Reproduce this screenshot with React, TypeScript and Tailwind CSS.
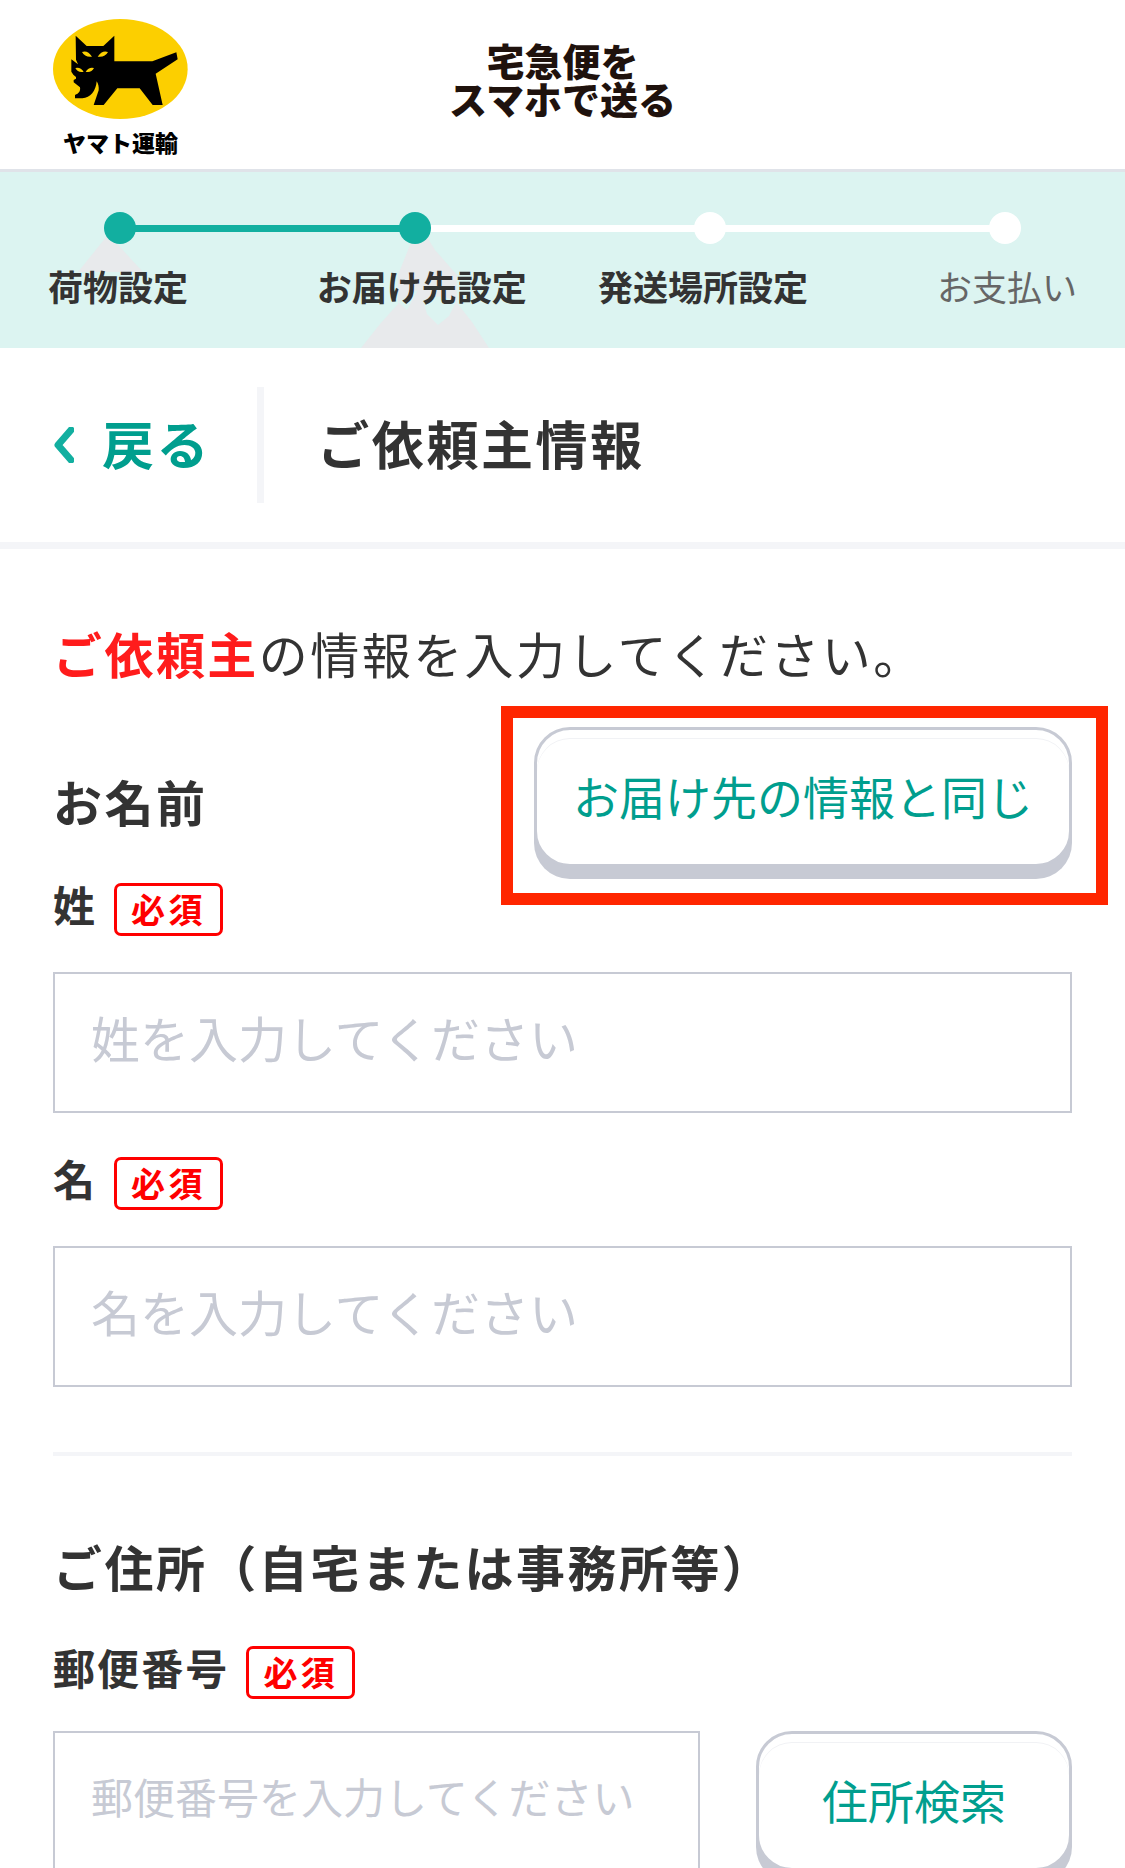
const steps = [
  { label: "荷物設定", done: true, className: "text-left font-bold text-[#333]" },
  { label: "お届け先設定", done: true, className: "text-center font-bold text-[#333]" },
  { label: "発送場所設定", done: false, className: "text-center font-bold text-[#333]" },
  { label: "お支払い", done: false, className: "text-right text-[#666]" },
];

function YamatoLogo() {
  return (
    <div className="flex w-[135px] flex-col items-center gap-[9px]">
      <svg viewBox="0 0 405 300" className="h-[100px] w-full" aria-hidden="true">
        <ellipse cx="202" cy="150" rx="202" ry="150" fill="#fccf00" />
        <path
          fill="#000"
          d="M68 50 L101 81 H151 L184 50 V127 H298 L370 100 L374 121 L308 164 L329 258 H299 L260 208 H193 L152 258 H122 L137 214 C138 204 136 195 131 187 C129 215 112 237 88 238 H66 V228 C78 224 83 216 81 205 L62 190 V183 L69 179 V174 L61 167 L55 158 V121 L75 136 L69 122 Z"
        />
        <path
          fill="#fccf00"
          d="M87 99 Q104 93 117 113 Q96 116 87 99 Z M165 99 Q147 93 134 113 Q156 116 165 99 Z M67 147 Q82 143 92 158 Q75 162 67 147 Z M123 147 Q108 143 98 158 Q115 162 123 147 Z"
        />
      </svg>
      <p className="text-[23px] leading-7 font-black whitespace-nowrap text-black">ヤマト運輸</p>
    </div>
  );
}

function Header() {
  return (
    <header className="grid grid-cols-[1fr_auto_1fr] border-b-3 border-[#e0e3e9] px-[53px] pt-[19px] pb-[13px]">
      <YamatoLogo />
      <h1 className="pt-[22px] text-center text-[38px] leading-[38px] font-black text-[#1f120d]">
        <span className="block">宅急便を</span>
        <span className="block">スマホで送る</span>
      </h1>
    </header>
  );
}

function Stepper() {
  return (
    <nav className="relative h-[176px] bg-[#dcf4f1]">
      <svg className="absolute top-0 left-0 h-[176px] w-[500px]" viewBox="0 0 500 176" aria-hidden="true">
        <g fill="#e8eaec">
          <path d="M107 64 L78 100 H143 L119 74 Z" />
          <path d="M412 68 L398 103 V132 L380 152 L361 176 H489 L472 150 L457 131 V103 L435 78 L427 65 Z" />
        </g>
        <g fill="#dcf4f1">
          <path d="M398 130 L407 138 L418 118 Z" />
          <path d="M423 128 L427 142 L438 153 L449 144 L456 130 Q440 120 423 128 Z" />
        </g>
      </svg>
      <div className="relative mx-[104px] flex items-center justify-between pt-10">
        <div className="absolute inset-x-4 h-[7px] bg-white" />
        <div className="absolute left-4 h-[7px] w-1/3 bg-[#12afa0]" />
        {steps.map((step) => (
          <span
            key={step.label}
            className={step.done ? "relative size-8 rounded-full bg-[#12afa0]" : "relative size-8 rounded-full bg-white"}
          />
        ))}
      </div>
      <ol className="relative grid grid-cols-4 pt-[22px] text-[35px] leading-10">
        {steps.map((step) => (
          <li key={step.label} className="first:pl-12 last:pr-12">
            <p className={step.className}>{step.label}</p>
          </li>
        ))}
      </ol>
    </nav>
  );
}

function TitleBar() {
  return (
    <div className="flex items-center border-b-7 border-[#f4f5f8] px-[53px] py-[39px]">
      <a href="#" className="flex items-center gap-7 text-[52px] font-bold tracking-wider text-[#009e8e]">
        <svg viewBox="0 0 21 36" className="h-9 w-[21px]" fill="none" stroke="#12afa0" strokeWidth="7" aria-hidden="true">
          <path d="M18 3 L5 18 L18 33" strokeLinecap="round" strokeLinejoin="round" />
        </svg>
        <span className="pb-1">戻る</span>
      </a>
      <div className="ml-[46px] flex h-[116px] items-center border-l-7 border-[#f4f5f8] pl-[53px]">
        <h2 className="pb-1 text-[52px] font-bold tracking-wider">ご依頼主情報</h2>
      </div>
    </div>
  );
}

function FieldLabel({ htmlFor, text }: { htmlFor: string; text: string }) {
  return (
    <label htmlFor={htmlFor} className="flex h-[53px] items-center gap-[17px] text-[42px] leading-[53px] font-bold tracking-wider">
      <span className="pb-3">{text}</span>
      <span className="h-[53px] rounded-[7px] border-3 border-[#ff0000] px-[14px] text-[34px] leading-[46px] tracking-widest text-[#ff0000]">
        必須
      </span>
    </label>
  );
}

const inputClass =
  "block h-[141px] w-full min-w-0 border-2 border-[#c7cad4] px-9 pb-3 placeholder:text-[#c7cad4] placeholder:opacity-100";

const buttonClass =
  "h-[140px] w-full rounded-[36px] border-3 border-[#c7cad4] bg-white pb-1 text-[46px] text-[#009e8e] shadow-[0_12px_0_#c7cad4,inset_0_8px_0_#fff,inset_0_9px_0_#f1f2f5]";

export default function App() {
  return (
    <div className="bg-white font-['Noto_Sans_CJK_JP',sans-serif] text-[#333]">
      <Header />
      <Stepper />
      <TitleBar />
      <form className="px-[53px] pt-[72px]">
        <p className="text-[49px] leading-16 tracking-wider">
          <strong className="font-bold text-[#ff1c1c]">ご依頼主</strong>の情報を入力してください。
        </p>

        <section className="border-b-4 border-[#f4f5f8] pt-0.5 pb-[65px]">
          <div className="flex justify-between">
            <h3 className="pt-[82px] text-[49px] leading-16 font-bold tracking-wider">お名前</h3>
            <div className="relative mt-10 h-[140px] w-[538px]">
              <button type="button" className={buttonClass}>
                お届け先の情報と同じ
              </button>
              <div className="pointer-events-none absolute -top-[21px] -right-9 -bottom-[38px] -left-[33px] border-12 border-[#ff2600]" />
            </div>
          </div>
          <div className="mt-4 flex flex-col gap-9">
            <FieldLabel htmlFor="last-name" text="姓" />
            <input id="last-name" type="text" placeholder="姓を入力してください" className={`${inputClass} text-[49px]`} />
          </div>
          <div className="mt-11 flex flex-col gap-9">
            <FieldLabel htmlFor="first-name" text="名" />
            <input id="first-name" type="text" placeholder="名を入力してください" className={`${inputClass} text-[49px]`} />
          </div>
        </section>

        <section className="pt-[78px]">
          <h3 className="text-[49px] leading-16 font-bold tracking-wider">ご住所（自宅または事務所等）</h3>
          <div className="mt-12 mb-8">
            <FieldLabel htmlFor="postal-code" text="郵便番号" />
          </div>
          <div className="flex gap-14">
            <div className="flex-1">
              <input id="postal-code" type="text" placeholder="郵便番号を入力してください" className={`${inputClass} text-[42px]`} />
            </div>
            <div className="w-[316px]">
              <button type="button" className={buttonClass}>
                住所検索
              </button>
            </div>
          </div>
        </section>
      </form>
    </div>
  );
}
